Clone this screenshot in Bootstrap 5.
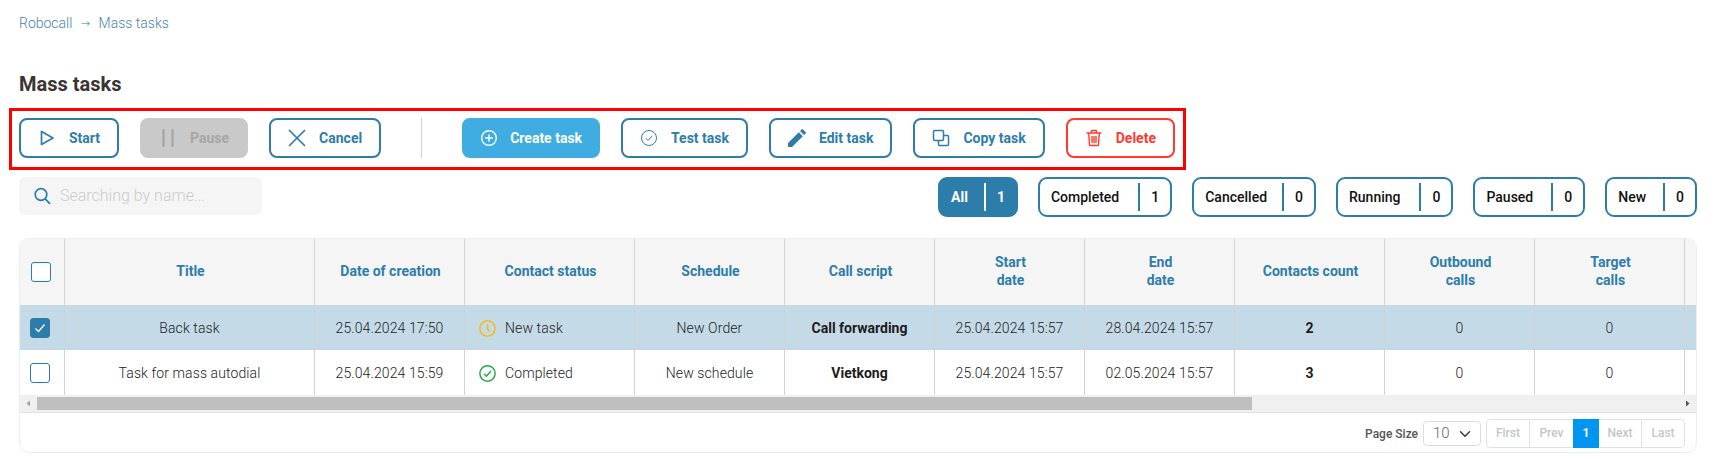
<!doctype html>
<html lang="en">
<head>
<meta charset="utf-8">
<title>Mass tasks</title>
<link href="https://cdn.jsdelivr.net/npm/bootstrap@5.3.0/dist/css/bootstrap.min.css" rel="stylesheet">
<style>
:root{--tone:#2d7dab;--line:#d3d3d3}
html,body{height:459px;overflow:hidden}
body{font-family:Roboto,"Liberation Sans",sans-serif;font-size:14px;color:#333;background:#fff;padding:13px 20px 0 19px;width:1717px}
.crumbs{--bs-breadcrumb-margin-bottom:0;--bs-breadcrumb-item-padding-x:8px;font-weight:300;line-height:21px;height:21px}
.crumbs a,.crumbs span{color:#4a84a8;text-decoration:none}
.crumbs .breadcrumb-item+.breadcrumb-item::before{content:"→";color:#2d7dab;font-family:"DejaVu Sans",sans-serif;font-size:11px;padding-right:9px}
.page-title{font-size:20px;font-weight:700;line-height:24px;color:#3a3533;margin:38px 0 0}
.action-box{border:3px solid #f00;margin:12px 0 0 -10px;padding:7px 8px 8px 7px;gap:21px;width:1177px;height:62px}
.act{height:40px;padding:0 17px;gap:13px;border:2px solid var(--tone);border-radius:8px;background:#fff;color:var(--tone);font-weight:700;font-size:14px;white-space:nowrap;flex:none}
.act svg{width:18px;height:18px;flex:none}
.act.fill{background:#3fade2;border-color:#3fade2;color:#fff;padding:0 16px;gap:12px}
.act.off{background:#c9c9c9;border-color:#c9c9c9;color:#a6a6a6;opacity:1}
.act.warn{border-color:#ff3b30;color:#ff3b30}
.split{width:1px;height:40px;background:var(--line);margin:0 19px;flex:none}
.tools-row{margin-top:7px;height:40px}
.finder{width:243px;height:38px;background:#f5f5f5;border-radius:6px;padding-left:15px;gap:9px}
.finder input{border:0;background:none;outline:0;padding:0;flex:1;min-width:0;font-size:16px;font-weight:300;color:#333}
.finder input::placeholder{color:#ccc;opacity:1}
.chip{height:40px;border:2px solid var(--tone);border-radius:9px;padding:0 11px 0 11px;color:#111;font-weight:500;background:#fff}
.chip i{display:block;width:2px;height:28px;background:var(--tone);margin:0 11px 0 var(--gap)}
.chip.on{background:var(--tone);color:#fff;font-weight:700}
.chip.on i{background:#fff}
.grid-card{margin-top:21px;width:1678px;height:215px;border:1px solid #eee;border-radius:10px;overflow:hidden;background:#fff}
.grid-view{height:156px;overflow:hidden}
.grid-table{table-layout:fixed;width:2270px;margin:0;--bs-table-bg:transparent;--bs-table-color:#222;border-collapse:separate;border-spacing:0}
.grid-table th,.grid-table td{border:0;border-right:1px solid var(--line);padding:0 8px;text-align:center;vertical-align:middle;font-weight:300;box-shadow:none}
.grid-table th{height:66px;background:#f5f5f5;color:var(--tone);font-weight:700;line-height:18px;padding:0 7px 2px 9px}
.grid-table td{height:45px;color:#222;letter-spacing:.1px;padding-top:1px}
.grid-table td.strong{font-weight:700;color:#1c1c1c;letter-spacing:0}
.grid-table tr.picked td{background:#c5dae7}
.grid-table td.state{text-align:left;padding-left:14px}
.state-in{gap:9px}
.state-in svg{width:17px;height:17px;flex:none}
.grid-table .form-check-input{width:20px;height:20px;margin:0;border:1.5px solid var(--tone);border-radius:3px;display:block;position:relative}
.grid-table th:first-child,.grid-table td:first-child{padding-left:10px;padding-right:0}
.grid-table th:first-child{padding-left:11px;padding-top:2px}
.grid-table .form-check-input:checked{background-color:var(--tone);border-color:var(--tone);background-size:20px;background-image:url("data:image/svg+xml,%3csvg xmlns='http://www.w3.org/2000/svg' viewBox='0 0 20 20'%3e%3cpath fill='none' stroke='%23fff' stroke-width='1.300' d='M5.500 10.500l3 3 6-7'/%3e%3c/svg%3e")}
.bar{height:17px;background:#f0f0f0;border-bottom:1px solid #e0e0e0;box-sizing:content-box;padding:0}
.bar-end{width:17px;height:17px;flex:none}
.bar-track{padding:2px 0;flex:1}
.bar-thumb{height:13px;width:1215px;background:#bfbfbf}
.grid-foot{height:41px;padding:5px 11px 5px 0;gap:5px;font-weight:500;font-size:12px;color:#555}
.size-pick{width:58px;height:25px;padding:0 0 0 9px;font-size:15px;font-weight:300;color:#666;border-color:#ddd;border-radius:4px;background-position:right 7px center}
.pager{--bs-pagination-padding-x:0;--bs-pagination-padding-y:0;--bs-pagination-font-size:12px;--bs-pagination-border-color:#eee;--bs-pagination-border-radius:4px;margin:0}
.pager .page-link{height:29px;line-height:27px;text-align:center;font-weight:500;color:#c6c6c6;background:#fff;width:44px}
.pager .page-item:nth-child(2) .page-link{width:45px}
.pager .page-item.active .page-link{width:26px;background:#0095f0;border-color:#0095f0;color:#fff;font-weight:700}
</style>
</head>
<body>
<nav aria-label="breadcrumb"><ol class="breadcrumb crumbs"><li class="breadcrumb-item"><a href="#">Robocall</a></li><li class="breadcrumb-item active"><span>Mass tasks</span></li></ol></nav>
<h1 class="page-title">Mass tasks</h1>

<div class="action-box d-flex align-items-start">
  <button class="btn act d-flex align-items-center"><svg viewBox="0 0 18 18" fill="none" stroke="currentColor" stroke-width="1.7" stroke-linejoin="round"><path d="M3.500 2.500v13L15 9z"/></svg>Start</button>
  <button class="btn act off d-flex align-items-center" disabled><svg viewBox="0 0 18 18" fill="none" stroke="currentColor" stroke-width="2.200"><path d="M4.500 0v18M13.500 0v18"/></svg>Pause</button>
  <button class="btn act d-flex align-items-center"><svg viewBox="0 0 18 18" fill="none" stroke="currentColor" stroke-width="1.700"><path d="M1 1l16 16M17 1L1 17"/></svg>Cancel</button>
  <div class="split"></div>
  <button class="btn act fill d-flex align-items-center"><svg viewBox="0 0 18 18" fill="none" stroke="currentColor" stroke-width="1.400"><circle cx="9" cy="9" r="7.300"/><path d="M9 5.200v7.600M5.200 9h7.600"/></svg>Create task</button>
  <button class="btn act d-flex align-items-center"><svg viewBox="0 0 18 18" fill="none" stroke="currentColor" stroke-width="1"><circle cx="9" cy="9" r="7.500"/><path d="M5.800 9.200l2.200 2.200 4.300-4.600"/></svg>Test task</button>
  <button class="btn act d-flex align-items-center"><svg viewBox="0 0 18 18" fill="currentColor"><path d="M0 18v-4L10.800 3.200l4 4L4 18zM12 2l1.600-1.600a1 1 0 0 1 1.400 0l2.600 2.600a1 1 0 0 1 0 1.400L16 6z"/></svg>Edit task</button>
  <button class="btn act d-flex align-items-center"><svg viewBox="0 0 18 18" fill="none" stroke="currentColor" stroke-width="1.500" stroke-linejoin="round"><rect x="1.500" y="1.500" width="10" height="10" rx="1.500"/><path d="M11.500 6.500h4a1 1 0 0 1 1 1v8a1 1 0 0 1-1 1h-8a1 1 0 0 1-1-1v-4"/></svg>Copy task</button>
  <button class="btn act warn d-flex align-items-center"><svg viewBox="0 0 18 18" fill="none" stroke="currentColor" stroke-width="1.400" stroke-linecap="round"><path d="M2 4h14M6.500 4V2.200a.7.7 0 0 1 .7-.7h3.600a.7.7 0 0 1 .7.700V4M3.700 4l.8 11.800a.8.800 0 0 0 .8.700h7.400a.8.800 0 0 0 .8-.700L14.300 4M7 7.500v6M9 7.500v6M11 7.500v6"/></svg>Delete</button>
</div>

<div class="tools-row d-flex justify-content-between align-items-start">
  <label class="finder d-flex align-items-center"><svg width="17" height="18" viewBox="0 0 17 18" fill="none" stroke="#2d7dab" stroke-width="1.700"><circle cx="7" cy="7.500" r="5.800"/><path d="M11.200 11.800l4.800 5"/></svg><input type="text" placeholder="Searching by name..." aria-label="Search"></label>
  <div class="d-flex" style="gap:20px">
    <div class="chip on d-flex align-items-center" style="--gap:16px">All<i></i>1</div>
    <div class="chip d-flex align-items-center" style="--gap:19px">Completed<i></i>1</div>
    <div class="chip d-flex align-items-center" style="--gap:15px">Cancelled<i></i>0</div>
    <div class="chip d-flex align-items-center" style="--gap:19px">Running<i></i>0</div>
    <div class="chip d-flex align-items-center" style="--gap:18px">Paused<i></i>0</div>
    <div class="chip d-flex align-items-center" style="--gap:17px">New<i></i>0</div>
  </div>
</div>

<div class="grid-card">
  <div class="grid-view">
    <table class="table grid-table">
      <colgroup><col style="width:45px"><col style="width:250px"><col style="width:150px"><col style="width:170px"><col style="width:150px"><col style="width:150px"><col style="width:150px"><col style="width:150px"><col style="width:150px"><col style="width:150px"><col style="width:150px"><col></colgroup>
      <thead><tr>
        <th><input class="form-check-input" type="checkbox" aria-label="All"></th>
        <th>Title</th><th>Date of creation</th><th>Contact status</th><th>Schedule</th><th>Call script</th><th>Start<br>date</th><th>End<br>date</th><th>Contacts count</th><th>Outbound<br>calls</th><th>Target<br>calls</th><th></th>
      </tr></thead>
      <tbody>
        <tr class="picked">
          <td><input class="form-check-input" type="checkbox" checked aria-label="Select"></td>
          <td>Back task</td><td>25.04.2024 17:50</td>
          <td class="state"><div class="state-in d-flex align-items-center"><svg viewBox="0 0 16 16" fill="none" stroke="#f5b914" stroke-width="1.400"><circle cx="8" cy="8" r="7.200"/><path d="M8 3.800v4.400l2 2.600"/></svg>New task</div></td>
          <td>New Order</td><td class="strong">Call forwarding</td><td>25.04.2024 15:57</td><td>28.04.2024 15:57</td><td class="strong">2</td><td>0</td><td>0</td><td></td>
        </tr>
        <tr>
          <td><input class="form-check-input" type="checkbox" aria-label="Select"></td>
          <td>Task for mass autodial</td><td>25.04.2024 15:59</td>
          <td class="state"><div class="state-in d-flex align-items-center"><svg viewBox="0 0 16 16" fill="none" stroke="#27a94a" stroke-width="1.400"><circle cx="8" cy="8" r="7.200"/><path d="M4.700 8.200l2.300 2.300 4.300-4.800"/></svg>Completed</div></td>
          <td>New schedule</td><td class="strong">Vietkong</td><td>25.04.2024 15:57</td><td>02.05.2024 15:57</td><td class="strong">3</td><td>0</td><td>0</td><td></td>
        </tr>
      </tbody>
    </table>
  </div>
  <div class="bar d-flex">
    <svg class="bar-end" viewBox="0 0 17 17"><path d="M10 5.500v6L6.500 8.500z" fill="#a3a3a3"/></svg>
    <div class="bar-track"><div class="bar-thumb"></div></div>
    <svg class="bar-end" viewBox="0 0 17 17"><path d="M7 5.500v6l3.500-3z" fill="#505050"/></svg>
  </div>
  <div class="grid-foot d-flex justify-content-end align-items-center">
    <span>Page Size</span>
    <select class="form-select size-pick" aria-label="Page size"><option>10</option></select>
    <ul class="pagination pager">
      <li class="page-item disabled"><a class="page-link" href="#">First</a></li>
      <li class="page-item disabled"><a class="page-link" href="#">Prev</a></li>
      <li class="page-item active"><a class="page-link" href="#">1</a></li>
      <li class="page-item disabled"><a class="page-link" href="#">Next</a></li>
      <li class="page-item disabled"><a class="page-link" href="#">Last</a></li>
    </ul>
  </div>
</div>
<script src="https://cdn.jsdelivr.net/npm/bootstrap@5.3.0/dist/js/bootstrap.bundle.min.js"></script>
</body>
</html>
